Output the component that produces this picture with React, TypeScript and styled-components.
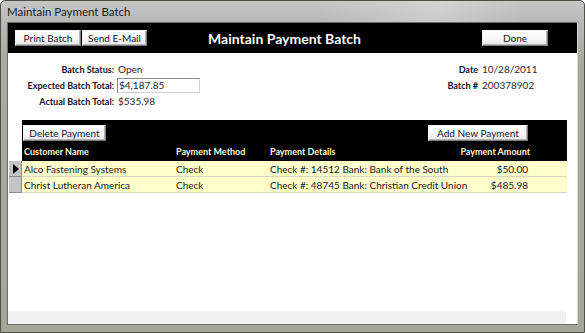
import styled, { createGlobalStyle } from 'styled-components';

const GlobalStyle = createGlobalStyle`
	html, body {
		margin: 0;
		padding: 0;
		background: #ffffff;
	}
	body {
		font-family: Lato, 'Liberation Sans', sans-serif;
	}
`;

type Payment = {
	customer: string;
	method: string;
	details: string;
	amount: string;
};

const payments: Payment[] = [
	{ customer: 'Alco Fastening Systems', method: 'Check', details: 'Check #: 14512 Bank: Bank of the South', amount: '$50.00' },
	{ customer: 'Christ Lutheran America', method: 'Check', details: 'Check #: 48745 Bank: Christian Credit Union', amount: '$485.98' },
];

const App = () => {
	return (
		<>
			<GlobalStyle />
			<StWindow>
				<StTitleBar>Maintain Payment Batch</StTitleBar>
				<StClient>
					<StHeader>
						<StButtonGroup>
							<StButton $width={66}>Print Batch</StButton>
							<StButton $width={65}>Send E-Mail</StButton>
						</StButtonGroup>
						<StHeaderTitle>Maintain Payment Batch</StHeaderTitle>
						<StHeaderRight>
							<StButton $width={66}>Done</StButton>
						</StHeaderRight>
					</StHeader>

					<StFields>
						<StFieldGrid $labelWidth={106}>
							<StLabel>Batch Status:</StLabel>
							<StValue>Open</StValue>
							<StLabel>Expected Batch Total:</StLabel>
							<StInputBox>$4,187.85</StInputBox>
							<StLabel>Actual Batch Total:</StLabel>
							<StValue>$535.98</StValue>
						</StFieldGrid>
						<StFieldGrid $labelWidth={100}>
							<StLabel>Date</StLabel>
							<StValue>10/28/2011</StValue>
							<StLabel>Batch #</StLabel>
							<StValue>200378902</StValue>
						</StFieldGrid>
					</StFields>

					<StSubform>
						<StSubHeader>
							<StSubButtons>
								<StButton $width={83}>Delete Payment</StButton>
								<StButton $width={100}>Add New Payment</StButton>
							</StSubButtons>
							<StColumns>
								<StColHead>Customer Name</StColHead>
								<StColHead>Payment Method</StColHead>
								<StColHead>Payment Details</StColHead>
								<StColHead $right>Payment Amount</StColHead>
							</StColumns>
						</StSubHeader>
						{payments.map((p, i) => (
							<StRow key={p.customer}>
								<StSelector>{i === 0 && <StArrow />}</StSelector>
								<StCells>
									<StCell>{p.customer}</StCell>
									<StCell>{p.method}</StCell>
									<StCell>{p.details}</StCell>
									<StCell $right>{p.amount}</StCell>
								</StCells>
							</StRow>
						))}
					</StSubform>

					<StSpacer />
					<StScrollBar />
				</StClient>
			</StWindow>
		</>
	);
};

export default App;

const StWindow = styled.div`
	width: 585px;
	height: 333px;
	box-sizing: border-box;
	display: flex;
	flex-direction: column;
	padding: 0 6px 7px 6px;
	border: 1px solid #4e5048;
	border-radius: 5px 5px 0 0;
	background: linear-gradient(to bottom, #c6c6c6 0px, #b8b8b8 22px, #a9ab9c 60px, #a4a697 100%);
`;

const StTitleBar = styled.div`
	height: 21px;
	display: flex;
	align-items: center;
	font-family: Lato, sans-serif;
	font-size: 11.5px;
	color: #1c1c1c;
	background: linear-gradient(100deg, transparent 0%, transparent 55%, rgba(255, 255, 255, 0.25) 75%, transparent 90%);
`;

const StClient = styled.div`
	flex: 1;
	display: flex;
	flex-direction: column;
	background: #ffffff;
	border: 1px solid #6c6e64;
	border-right-color: #d8d8d8;
	min-height: 0;
`;

const StHeader = styled.div`
	height: 30px;
	display: grid;
	grid-template-columns: 1fr auto 1fr;
	align-items: center;
	padding: 0 23px 0 7px;
	background: #000000;
`;

const StButtonGroup = styled.div`
	display: flex;
	gap: 1px;
`;

const StHeaderRight = styled.div`
	display: flex;
	justify-content: flex-end;
	padding-right: 6px;
`;

const StHeaderTitle = styled.div`
	font-family: Lato, sans-serif;
	font-weight: 700;
	font-size: 14px;
	color: #ffffff;
`;

const StButton = styled.button<{ $width: number }>`
	width: ${(p) => p.$width}px;
	height: 16px;
	padding: 0;
	box-sizing: border-box;
	font-family: Lato, sans-serif;
	font-size: 10px;
	line-height: 14px;
	text-align: center;
	color: #16163a;
	background: linear-gradient(to bottom, #ffffff 0%, #f6f6f6 60%, #e4e4e4 100%);
	border: 1px solid;
	border-color: #f4f4f4 #7a7a7a #7a7a7a #f4f4f4;
	box-shadow: inset -1px -1px 0 #b8b8b8;
	cursor: pointer;
`;

const StFields = styled.div`
	height: 67px;
	display: grid;
	grid-template-columns: 370px auto;
	padding-top: 8px;
	box-sizing: border-box;
`;

const StFieldGrid = styled.div<{ $labelWidth: number }>`
	display: grid;
	grid-template-columns: ${(p) => p.$labelWidth}px auto;
	grid-auto-rows: 16px;
	column-gap: 3px;
	align-items: center;
	align-content: start;
	justify-content: start;
`;

const StLabel = styled.div`
	text-align: right;
	font-family: Lato, sans-serif;
	font-weight: 700;
	font-size: 9px;
	color: #101030;
	white-space: nowrap;
`;

const StValue = styled.div`
	font-family: Lato, sans-serif;
	font-size: 10px;
	color: #2a2a3a;
	padding-left: 1px;
	white-space: nowrap;
`;

const StInputBox = styled.div`
	width: 83px;
	height: 15px;
	box-sizing: border-box;
	border: 1px solid #8a8a8a;
	border-right-color: #d0d0d0;
	border-bottom-color: #d0d0d0;
	font-family: Lato, sans-serif;
	font-size: 10px;
	line-height: 13px;
	padding-left: 1px;
	color: #222232;
`;

const StSubform = styled.div`
	width: 559px;
	display: flex;
	flex-direction: column;
`;

const StSubHeader = styled.div`
	margin-left: 14px;
	height: 41px;
	background: #000000;
	display: flex;
	flex-direction: column;
	box-sizing: border-box;
	padding: 5px 37px 0 1px;
`;

const StSubButtons = styled.div`
	display: flex;
	justify-content: space-between;
	padding-right: 2px;
`;

const StColumns = styled.div`
	flex: 1;
	display: grid;
	grid-template-columns: 152px 94px 1fr auto;
	align-items: center;
	padding-left: 1px;
`;

const StColHead = styled.div<{ $right?: boolean }>`
	font-family: Lato, sans-serif;
	font-weight: 700;
	font-size: 9px;
	color: #fff8dc;
	text-align: ${(p) => (p.$right ? 'right' : 'left')};
`;

const StRow = styled.div`
	display: flex;
	height: 16px;
`;

const StSelector = styled.div`
	width: 13px;
	margin-left: 1px;
	box-sizing: border-box;
	background: #c4c4c4;
	border-bottom: 1px solid #8c8c8c;
	border-right: 1px solid #8c8c8c;
	display: flex;
	align-items: center;
	justify-content: center;
`;

const StArrow = styled.span`
	width: 0;
	height: 0;
	border-top: 5px solid transparent;
	border-bottom: 5px solid transparent;
	border-left: 6px solid #000000;
	margin-left: 1px;
`;

const StCells = styled.div`
	flex: 1;
	display: grid;
	grid-template-columns: 152px 94px 1fr auto;
	align-items: center;
	padding: 0 39px 0 2px;
	background: #ffffcc;
	border-bottom: 1px solid #d8d8c0;
`;

const StCell = styled.div<{ $right?: boolean }>`
	font-family: Lato, sans-serif;
	font-size: 10px;
	color: #1a1a2a;
	white-space: nowrap;
	text-align: ${(p) => (p.$right ? 'right' : 'left')};
`;

const StSpacer = styled.div`
	flex: 1;
`;

const StScrollBar = styled.div`
	width: 558px;
	height: 12px;
	background: #f0f0f0;
	border-top: 1px solid #f6f6f6;
`;
